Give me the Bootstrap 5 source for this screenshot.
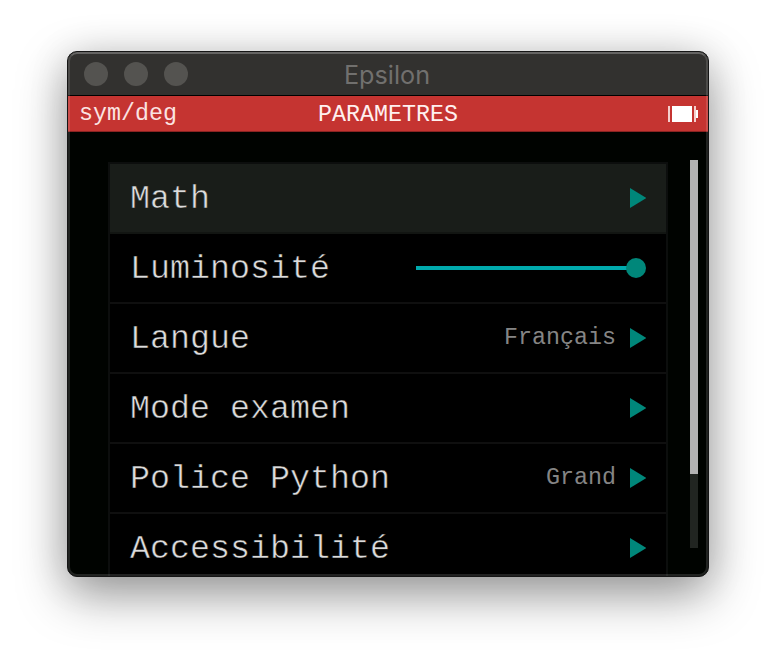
<!DOCTYPE html>
<html lang="fr">
<head>
<meta charset="utf-8">
<title>Epsilon</title>
<link href="https://cdn.jsdelivr.net/npm/bootstrap@5.3.0/dist/css/bootstrap.min.css" rel="stylesheet">
<style>
body{background:#fff;height:660px;overflow:hidden;padding:51px 0 0 67px;font-family:"Liberation Mono",monospace}
.window{width:642px;height:526px;border:1px solid #151515;border-radius:10px;background:#000300;box-shadow:0 18px 50px rgba(0,0,0,.38),0 4px 40px rgba(0,0,0,.12)}
.window::after{content:"";position:absolute;inset:0;border:2px solid rgba(255,255,255,.13);border-top-color:rgba(255,255,255,.25);border-radius:9px;pointer-events:none}
.frame{border-radius:9px}
.titlebar{height:44px;background:#32312f;border-bottom:1px solid #000;padding-left:16px;font:25px/44px Inter,sans-serif;color:#71706e}
.dot{width:24px;height:24px;background:#545350}
.app-title{padding-top:2px;font-size:25.2px;left:-1px}
.status{height:36px;background:#c53431;color:#fbe3e2;font-size:23.33px;line-height:34px;padding:0 10px 0 11px;border-bottom:1px solid #8a2422}
.status-title{font-size:23.33px;line-height:36px;padding-top:3px;color:#fff0ef}
.menu{width:560px;margin:30px 0 0 40px;border:2px solid #0c0e0d;border-bottom:0;background:#000}
.entry{height:70px;border-bottom:2px solid #0f0f0f;padding:0 20px;font-size:33.33px;color:#dcdcdc}
.entry.selected{background:#191d19;border-color:#121512}
.label{line-height:68px;padding-top:2px;-webkit-text-stroke:.5px #000}
.selected .label{-webkit-text-stroke-color:#191d19}
.value{font-size:23.33px;color:#858585;line-height:64px;margin-right:14px;padding-bottom:1px}
.arrow{width:16px;height:20px;fill:#00877a}
.slide{width:216px;height:4px;background:#00aaad}
.knob{width:20px;height:20px;background:#00877a;margin-left:-6px}
.track{width:8px;height:388px;margin:28px 10px 0 auto;background:#212521}
.thumb{height:314px;background:#b3b3b3}
</style>
</head>
<body>
<main class="window position-relative">
  <div class="frame overflow-hidden h-100 d-flex flex-column">
    <header class="titlebar position-relative d-flex align-items-center gap-3 flex-shrink-0">
      <span class="dot rounded-circle"></span><span class="dot rounded-circle"></span><span class="dot rounded-circle"></span>
      <span class="app-title position-absolute w-100 text-center">Epsilon</span>
    </header>
    <div class="status position-relative d-flex justify-content-between align-items-center flex-shrink-0">
      <span>sym/deg</span>
      <span class="status-title position-absolute start-0 w-100 text-center">PARAMETRES</span>
      <svg width="30" height="16" viewBox="0 0 30 16"><path fill="#fff" d="M4 0h20v16H4z"/><path fill="#f5cfcd" d="M0 0h2v16H0zM26 0h2v16h-2z"/><path fill="#fff" d="M28 4h2v8h-2z"/></svg>
    </div>
    <div class="d-flex flex-grow-1 overflow-hidden">
      <div class="menu flex-shrink-0">
        <div class="entry selected d-flex align-items-center"><span class="label me-auto">Math</span><svg class="arrow"><path d="M0 0 16.5 10 0 20z"/></svg></div>
        <div class="entry d-flex align-items-center"><span class="label me-auto">Luminosité</span><span class="slide"></span><span class="knob rounded-circle"></span></div>
        <div class="entry d-flex align-items-center"><span class="label me-auto">Langue</span><span class="value">Français</span><svg class="arrow"><path d="M0 0 16.5 10 0 20z"/></svg></div>
        <div class="entry d-flex align-items-center"><span class="label me-auto">Mode examen</span><svg class="arrow"><path d="M0 0 16.5 10 0 20z"/></svg></div>
        <div class="entry d-flex align-items-center"><span class="label me-auto">Police Python</span><span class="value">Grand</span><svg class="arrow"><path d="M0 0 16.5 10 0 20z"/></svg></div>
        <div class="entry d-flex align-items-center"><span class="label me-auto">Accessibilité</span><svg class="arrow"><path d="M0 0 16.5 10 0 20z"/></svg></div>
      </div>
      <div class="track flex-shrink-0"><div class="thumb"></div></div>
    </div>
  </div>
</main>
<script src="https://cdn.jsdelivr.net/npm/bootstrap@5.3.0/dist/js/bootstrap.bundle.min.js"></script>
</body>
</html>
